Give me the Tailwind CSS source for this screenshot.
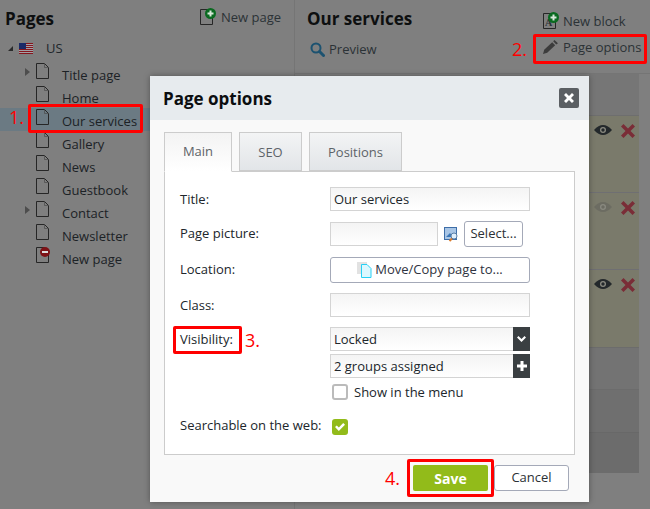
<!DOCTYPE html>
<html lang="en">
<head>
  <meta charset="utf-8">
  <title>Page options</title>
  <script src="https://cdn.jsdelivr.net/npm/@tailwindcss/browser@4"></script>
</head>
<body class="m-0">
<svg width="0" height="0" class="absolute">
  <defs>
    <symbol id="file" viewBox="0 0 13 16"><path d="M.5.5H8.500L12.500 4.500V15.500H.5Z" fill="none" stroke="#262626"/><path d="M8.500.5V4.500H12.500" fill="none" stroke="#4a4a4a" stroke-width=".7"/></symbol>
    <symbol id="plus" viewBox="0 0 11 11"><circle cx="5.500" cy="5.500" r="5.500" fill="#0a6a20"/><path d="M4.500 2.500h2v2h2v2h-2v2h-2v-2h-2v-2h2Z" fill="#d8e8da"/></symbol>
    <symbol id="eye" viewBox="0 0 18 10"><path d="M0 5C3 1.500 6 0 9 0s6 1.500 9 5c-3 3.500-6 5-9 5S3 8.500 0 5Z" fill="currentColor"/><circle cx="9" cy="5" r="3" fill="#8a8a80"/><circle cx="9" cy="5" r="1.700" fill="currentColor"/></symbol>
    <symbol id="cross" viewBox="0 0 14 14"><path d="M0 2.500 2.500 0 7 4.500 11.500 0 14 2.500 9.500 7 14 11.500 11.500 14 7 9.500 2.500 14 0 11.500 4.500 7Z" fill="#7a2d37"/></symbol>
  </defs>
</svg>

<div class="relative w-[650px] h-[509px] overflow-hidden bg-[#7f7f7f] font-['Open_Sans',sans-serif] text-[13px] text-[#1c2226]">

  <div class="flex h-full">
    <!-- pages tree -->
    <aside class="w-[295px] h-full border-r border-[#757575] shrink-0">
      <div class="flex justify-between items-start h-[42px] pl-[5px] pr-[13px]">
        <h2 class="text-[17px] font-bold leading-[23px] mt-[7px] text-[#0d0f10]">Pages</h2>
        <div class="flex items-start gap-[5px] mt-[8px] text-[#2b3236]">
          <span class="relative block w-[16px] h-[17px]">
            <svg class="absolute left-0 top-[1px] w-[13px] h-[16px]"><use href="#file"/></svg>
            <svg class="absolute left-[5px] top-0 w-[11px] h-[11px]"><use href="#plus"/></svg>
          </span>
          <span class="leading-[18px]">New page</span>
        </div>
      </div>
      <div class="flex items-center h-[12px] mb-[8px]">
        <span class="ml-[8px] w-0 h-0 border-l-[5px] border-l-transparent border-b-[5px] border-b-[#2a2a2a]"></span>
        <svg class="ml-[6px] w-[14px] h-[11px]" viewBox="0 0 14 11">
          <rect width="14" height="11" fill="#a3a0a6"/>
          <path d="M0 .5h14M0 2.500h14M0 4.500h14M0 6.500h14M0 8.500h14M0 10.500h14" stroke="#84161d" stroke-width="1"/>
          <rect width="7" height="6" fill="#1a2a68"/>
        </svg>
        <span class="ml-[13px] leading-[12px] text-[#20272b]">US</span>
      </div>
      <ul class="flex flex-col">
        <li class="flex h-[23px] pl-[25px]">
          <span class="w-0 h-0 mt-[6px] border-y-[4px] border-y-transparent border-l-[5px] border-l-[#4d4d4d]"></span>
          <svg class="ml-[6px] mt-[1px] w-[13px] h-[16px]"><use href="#file"/></svg>
          <span class="ml-[13px] mt-[4px] leading-[18px]">Title page</span>
        </li>
        <li class="flex h-[23px] pl-[36px]">
          <svg class="mt-[1px] w-[13px] h-[16px]"><use href="#file"/></svg>
          <span class="ml-[13px] mt-[4px] leading-[18px]">Home</span>
        </li>
        <li class="flex h-[23px] pl-[36px] bg-[#6b7a83]">
          <svg class="mt-[1px] w-[13px] h-[16px]"><use href="#file"/></svg>
          <span class="ml-[13px] mt-[4px] leading-[18px]">Our services</span>
        </li>
        <li class="flex h-[23px] pl-[36px]">
          <svg class="mt-[1px] w-[13px] h-[16px]"><use href="#file"/></svg>
          <span class="ml-[13px] mt-[4px] leading-[18px]">Gallery</span>
        </li>
        <li class="flex h-[23px] pl-[36px]">
          <svg class="mt-[1px] w-[13px] h-[16px]"><use href="#file"/></svg>
          <span class="ml-[13px] mt-[4px] leading-[18px]">News</span>
        </li>
        <li class="flex h-[23px] pl-[36px]">
          <svg class="mt-[1px] w-[13px] h-[16px]"><use href="#file"/></svg>
          <span class="ml-[13px] mt-[4px] leading-[18px]">Guestbook</span>
        </li>
        <li class="flex h-[23px] pl-[25px]">
          <span class="w-0 h-0 mt-[6px] border-y-[4px] border-y-transparent border-l-[5px] border-l-[#4d4d4d]"></span>
          <svg class="ml-[6px] mt-[1px] w-[13px] h-[16px]"><use href="#file"/></svg>
          <span class="ml-[13px] mt-[4px] leading-[18px]">Contact</span>
        </li>
        <li class="flex h-[23px] pl-[36px]">
          <svg class="mt-[1px] w-[13px] h-[16px]"><use href="#file"/></svg>
          <span class="ml-[13px] mt-[4px] leading-[18px]">Newsletter</span>
        </li>
        <li class="relative flex h-[23px] pl-[36px]">
          <svg class="mt-[1px] w-[13px] h-[16px]"><use href="#file"/></svg>
          <span class="absolute left-[40px] top-[1px] w-[10px] h-[10px] rounded-full bg-[#7d1216] flex items-center justify-center"><span class="block w-[6px] h-[2px] bg-[#ddd]"></span></span>
          <span class="ml-[13px] mt-[4px] leading-[18px]">New page</span>
        </li>
      </ul>
    </aside>

    <!-- page content -->
    <main class="flex-1 min-w-0">
      <div class="flex justify-between h-[74px] border-b border-[#757575] pl-[12px] pr-[10px]">
        <div>
          <h2 class="text-[17px] font-bold leading-[23px] mt-[7px] text-[#0d0f10]">Our services</h2>
          <div class="flex items-center gap-[4px] mt-[10px] ml-[3px] text-[#2b3236]">
            <svg class="w-[15px] h-[15px]" viewBox="0 0 15 15"><circle cx="6" cy="6" r="4.500" fill="none" stroke="#1c5270" stroke-width="2"/><path d="m9.500 9.500 4 4" stroke="#1c5270" stroke-width="3" stroke-linecap="round"/></svg>
            <span class="leading-[18px]">Preview</span>
          </div>
        </div>
        <div class="text-[#2b3236] w-[97px]">
          <div class="flex items-start gap-[4px] mt-[12px]">
            <span class="relative block w-[16px] h-[18px] shrink-0">
              <svg class="absolute left-0 top-[1px] w-[13px] h-[16px]"><use href="#file"/></svg>
              <span class="absolute left-[2px] top-[6px] text-[10px] leading-[10px] font-bold font-['Liberation_Serif',serif]">A</span>
              <svg class="absolute left-[5px] top-0 w-[11px] h-[11px]"><use href="#plus"/></svg>
            </span>
            <span class="leading-[18px]">New block</span>
          </div>
          <div class="flex items-start gap-[5px] mt-[8px]">
            <svg class="w-[15px] h-[14px] shrink-0 mt-[2px]" viewBox="0 0 15 14"><path d="M0 14 1.200 9.800 9.200 2.200 12.200 5.200 4.200 12.800Z" fill="#3c3c3c"/><path d="M10.200 1.200 11.400 0 15 3.200 13.200 4.600Z" fill="#3c3c3c"/></svg>
            <span class="leading-[18px] whitespace-nowrap">Page options</span>
          </div>
        </div>
      </div>

      <!-- blocks behind the dialog -->
      <div class="flex justify-end pr-[11px]">
        <div class="w-[50px] flex flex-col">
          <div class="h-[42px] bg-[#767676] border-b border-[#6e6e6e]"></div>
          <div class="h-[77px] bg-[#7a7a6b] border-b border-[#6f6f72] flex gap-[9px] pl-[5px] pt-[8px] items-start">
            <svg class="w-[18px] h-[10px] mt-[1px] text-[#23282b]"><use href="#eye"/></svg>
            <svg class="w-[14px] h-[14px]"><use href="#cross"/></svg>
          </div>
          <div class="h-[77px] bg-[#7a7a6b] border-b border-[#6f6f72] flex gap-[9px] pl-[5px] pt-[8px] items-start">
            <svg class="w-[18px] h-[10px] mt-[1px] text-[#6c6c62]"><use href="#eye"/></svg>
            <svg class="w-[14px] h-[14px]"><use href="#cross"/></svg>
          </div>
          <div class="h-[77px] bg-[#7a7a6b] flex gap-[9px] pl-[5px] pt-[8px] items-start">
            <svg class="w-[18px] h-[10px] mt-[1px] text-[#23282b]"><use href="#eye"/></svg>
            <svg class="w-[14px] h-[14px]"><use href="#cross"/></svg>
          </div>
          <div class="h-[43px] bg-[#737373] border-y border-[#6c6c6c]"></div>
          <div class="h-[43px] bg-[#6f6f6f] border-b border-[#686868]"></div>
          <div class="h-[40px] bg-[#6c6c6c]"></div>
        </div>
      </div>
    </main>
  </div>

  <!-- dialog -->
  <section class="absolute left-[150px] top-[76px] w-[439px] h-[426px] bg-[#f9f9f9] shadow-[0_0_6px_rgba(0,0,0,0.35)] flex flex-col">
    <header class="flex items-center justify-between h-[44px] bg-[#e7ebee] pl-[13px] pr-[10px] shrink-0">
      <h3 class="text-[17px] font-bold text-[#0c0e10] leading-[23px]">Page options</h3>
      <button class="w-[20px] h-[20px] rounded-[2px] bg-[#5b5f63] flex items-center justify-center">
        <svg class="w-[10px] h-[10px]" viewBox="0 0 10 10"><path d="M0 2 2 0 5 3 8 0 10 2 7 5 10 8 8 10 5 7 2 10 0 8 3 5Z" fill="#fff"/></svg>
      </button>
    </header>

    <div class="px-[14px] pt-[12px] text-[#20262b]">
      <div class="flex gap-[7px] h-[40px] text-[13px] relative z-10">
        <div class="w-[68px] h-[40px] border border-[#ccc] border-b-white bg-linear-to-b from-[#f3f3f3] to-white flex items-center justify-center text-[#5d6368]">Main</div>
        <div class="w-[63px] h-[39px] pt-[2px] border border-[#ccc] bg-linear-to-b from-[#f3f4f5] to-[#e2e5e8] flex items-center justify-center text-[#5d6368]">SEO</div>
        <div class="w-[93px] h-[39px] pt-[2px] border border-[#ccc] bg-linear-to-b from-[#f3f4f5] to-[#e2e5e8] flex items-center justify-center text-[#5d6368]">Positions</div>
      </div>
      <div class="-mt-px h-[284px] border border-[#ccc] bg-white pl-[15px] pr-[44px] pt-[15px]">
        <div class="flex h-[24px] items-center">
          <label class="w-[150px] pt-[2px]">Title:</label>
          <div class="w-[200px] h-[24px] border border-[#d4d4d4] bg-linear-to-b from-[#f4f4f4] to-white px-[3px] leading-[22px]">Our services</div>
        </div>
        <div class="flex h-[26px] items-center mt-[10px]">
          <label class="w-[150px]">Page picture:</label>
          <div class="w-[108px] h-[24px] border border-[#d4d4d4] bg-linear-to-b from-[#f4f4f4] to-white"></div>
          <svg class="ml-[6px] w-[15px] h-[15px]" viewBox="0 0 15 15">
            <rect x=".5" y=".5" width="12" height="12" fill="#a9c6e6" stroke="#3e6ea8"/>
            <path d="M2 10 6 6l3 4Z" fill="#3c78b8"/>
            <circle cx="10" cy="9" r="3" fill="#dfeefb" stroke="#5a7fa6"/>
            <path d="m8 11.500-2.500 2.500" stroke="#d97a2b" stroke-width="2"/>
          </svg>
          <button class="ml-[5px] w-[59px] h-[26px] border border-[#a4a9b8] rounded-[3px] bg-white text-[#2c3135]">Select...</button>
        </div>
        <div class="flex h-[26px] items-center mt-[10px]">
          <label class="w-[150px]">Location:</label>
          <div class="w-[200px] h-[26px] border border-[#a4a9b8] rounded-[3px] bg-white flex items-center justify-center gap-[3px] text-[#2f3340]">
            <svg class="w-[15px] h-[16px]" viewBox="0 0 15 16">
              <rect x="0" y="0" width="10" height="12" fill="#e2e2e2"/>
              <path d="M4.500 2.500H10L14 6.500V15.500H4.500Z" fill="#dcf8ff" stroke="#28d0f5"/>
            </svg>
            <span>Move/Copy page to...</span>
          </div>
        </div>
        <div class="flex h-[24px] items-center mt-[10px]">
          <label class="w-[150px] pt-[2px]">Class:</label>
          <div class="w-[200px] h-[24px] border border-[#d4d4d4] bg-linear-to-b from-[#f4f4f4] to-white"></div>
        </div>
        <div class="flex h-[24px] items-center mt-[10px]">
          <label class="w-[150px] pt-[2px]">Visibility:</label>
          <div class="flex w-[200px] h-[24px] border border-[#d4d4d4] bg-linear-to-b from-[#f4f4f4] to-white">
            <span class="flex-1 px-[3px] leading-[22px]">Locked</span>
            <span class="-my-px -mr-px w-[17px] h-[24px] bg-[#3a3f42] flex items-center justify-center">
              <svg class="w-[9px] h-[6px]" viewBox="0 0 9 6"><path d="M0 1.500 1.500 0 4.500 3 7.500 0 9 1.500 4.500 6Z" fill="#fff"/></svg>
            </span>
          </div>
        </div>
        <div class="ml-[150px] mt-[3px] flex w-[200px] h-[24px] border border-[#d4d4d4] bg-linear-to-b from-[#f4f4f4] to-white">
          <span class="flex-1 px-[3px] leading-[22px]">2 groups assigned</span>
          <span class="-my-px -mr-px w-[17px] h-[24px] bg-[#3a3f42] flex items-center justify-center">
            <svg class="w-[10px] h-[10px]" viewBox="0 0 10 10"><path d="M3.500 0h3v3.500H10v3H6.500V10h-3V6.500H0v-3h3.500Z" fill="#fff"/></svg>
          </span>
        </div>
        <div class="ml-[152px] mt-[6px] flex items-center h-[16px]">
          <span class="w-[16px] h-[16px] rounded-[3px] border-2 border-[#bbb] bg-white"></span>
          <span class="ml-[6px] pt-[2px] text-[#20262b]">Show in the menu</span>
        </div>
        <div class="flex items-center h-[16px] mt-[19px]">
          <label class="w-[152px] pb-[2px] whitespace-nowrap">Searchable on the web:</label>
          <span class="w-[16px] h-[16px] rounded-[3px] bg-[#92bb1a] flex items-center justify-center">
            <svg class="w-[10px] h-[8px]" viewBox="0 0 10 8"><path d="M0 4 1.800 2.400 3.800 4.400 8.200 0 10 1.800 3.800 8Z" fill="#fff"/></svg>
          </span>
        </div>
      </div>
    </div>

    <footer class="flex justify-end gap-[6px] pr-[20px] pt-[10px]">
      <button class="w-[75px] h-[26px] rounded-[2px] bg-[#92bb1a] text-white font-bold text-[14px]">Save</button>
      <button class="w-[75px] h-[26px] rounded-[3px] border border-[#a4a9b8] bg-white text-[#2c3135]">Cancel</button>
    </footer>
  </section>

  <!-- annotations -->
  <div class="absolute left-[28px] top-[104px] w-[115px] h-[29px] border-[3px] border-[#f00] rounded-[2px]"></div>
  <span class="absolute left-[9px] top-[105px] text-[18px] leading-[24px] text-[#f00]">1.</span>
  <div class="absolute left-[533px] top-[34px] w-[114px] h-[30px] border-[3px] border-[#f00] rounded-[2px]"></div>
  <span class="absolute left-[512px] top-[37px] text-[18px] leading-[24px] text-[#f00]">2.</span>
  <div class="absolute left-[173px] top-[326px] w-[69px] h-[28px] border-[3px] border-[#f00] rounded-[2px]"></div>
  <span class="absolute left-[245px] top-[328px] text-[18px] leading-[24px] text-[#f00]">3.</span>
  <div class="absolute left-[407px] top-[459px] w-[87px] h-[38px] border-[3px] border-[#f00] rounded-[2px]"></div>
  <span class="absolute left-[385px] top-[466px] text-[18px] leading-[24px] text-[#f00]">4.</span>
</div>
</body>
</html>
